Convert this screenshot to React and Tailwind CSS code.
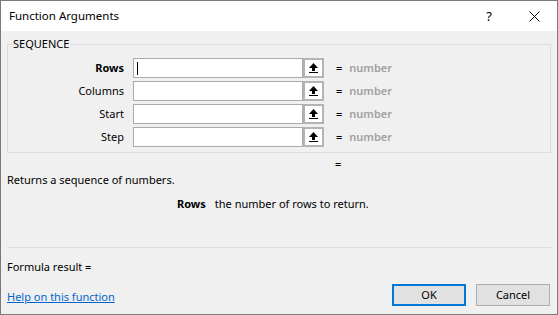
import React from 'react';

const ARGS = [
  { name: 'Rows', active: true },
  { name: 'Columns' },
  { name: 'Start' },
  { name: 'Step' },
];

const RefIcon = () => (
  <svg width="9" height="10" viewBox="0 0 9 10" className="block">
    <polygon points="4.5,0 9,5 0,5" fill="#000" />
    <rect x="3" y="5" width="3" height="3" fill="#000" />
    <rect x="0" y="9" width="9" height="1" fill="#000" />
  </svg>
);

const ArgRow = ({ name, active }) => (
  <div className="flex items-center h-[20px]">
    <div className={`w-[116px] text-right ${active ? 'font-bold' : ''}`}>{name}</div>
    <div className="ml-[9px] w-[170px] h-[20px] border border-[#ababab] bg-white flex items-center">
      {active && <span className="ml-[3px] w-px h-[13px] bg-black"></span>}
    </div>
    <div className="w-[21px] h-[20px] border-2 border-[#b4b4b4] bg-white flex items-center justify-center">
      <RefIcon />
    </div>
    <span className="ml-[12px] font-semibold">=</span>
    <span className="ml-[7px] font-semibold text-[#a0a0a0]">number</span>
  </div>
);

export default function App() {
  return (
    <div
      className="w-[558px] h-[315px] border border-[#7a7a7a] bg-[#f0f0f0] flex flex-col text-[11px] leading-[16px] text-black"
      style={{ fontFamily: '"Noto Sans", "Open Sans", sans-serif' }}
    >
      {/* Title bar */}
      <div className="h-[30px] bg-white flex items-center pl-[8px] shrink-0">
        <span className="flex-1 text-[11.5px]">Function Arguments</span>
        <span className="w-[14px] text-[13px] text-center">?</span>
        <svg width="11" height="11" viewBox="0 0 11 11" className="ml-[33px] mr-[17px]">
          <path d="M0.5 0.5L10.5 10.5M10.5 0.5L0.5 10.5" stroke="#000" strokeWidth="1" />
        </svg>
      </div>

      <div className="px-[6px] flex flex-col">
        {/* Group box */}
        <div className="relative mt-[13px] h-[109px] border border-[#dcdcdc] pt-[13px] flex flex-col gap-[3px]">
          <span className="absolute -top-[9px] left-[4px] px-[1px] bg-[#f0f0f0]">SEQUENCE</span>
          {ARGS.map((a) => (
            <ArgRow key={a.name} {...a} />
          ))}
        </div>

        <div className="mt-[3px] pl-[328px] font-semibold">=</div>
        <div>Returns a sequence of numbers.</div>
        <div className="mt-[8px] pl-[170px]">
          <span className="font-bold">Rows</span>
          <span className="ml-[9px]">the number of rows to return.</span>
        </div>

        <div className="mt-[35px] h-px bg-[#dcdcdc]"></div>

        <div className="mt-[11px]">Formula result =</div>

        <div className="mt-[9px] flex items-center">
          <a className="flex-1 mt-[3px] text-[#0066cc] underline">Help on this function</a>
          <button className="w-[74px] h-[22px] border-2 border-[#0078d7] bg-[#e1e1e1]">OK</button>
          <button className="ml-[10px] mr-[1px] w-[74px] h-[22px] border border-[#adadad] bg-[#e1e1e1]">Cancel</button>
        </div>
      </div>
    </div>
  );
}
